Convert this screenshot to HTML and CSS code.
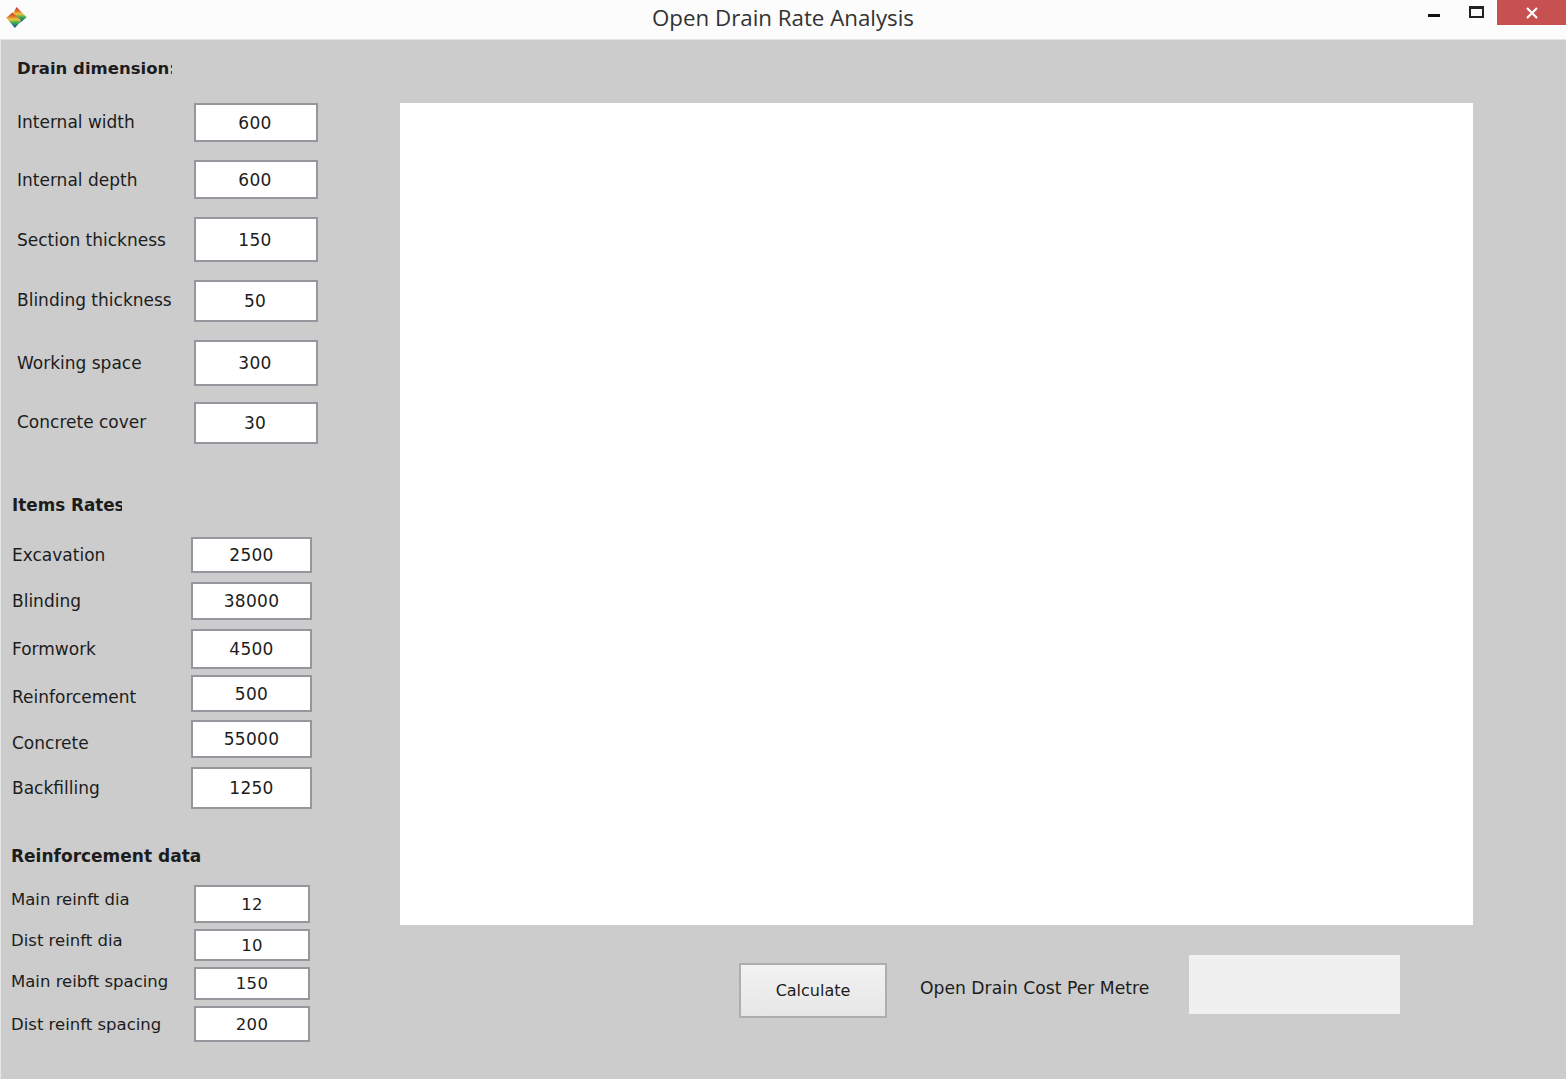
FILE: index.html
```html
<!DOCTYPE html>
<html lang="en">
  <head>
    <title>Open Drain Rate Analysis</title>
    <meta charset="UTF-8" />
    <link rel="stylesheet" href="styles.css">
  </head>
  <body>
    <div class="window">
      <div class="titlebar">
        <svg class="titlebar__logo" width="21" height="21" viewBox="0 0 60 62">
          <defs>
            <linearGradient id="rainbow" x1="0" y1="0" x2="0" y2="1">
              <stop offset="0" stop-color="#c8302a"/>
              <stop offset="0.25" stop-color="#e0702c"/>
              <stop offset="0.45" stop-color="#eec63c"/>
              <stop offset="0.65" stop-color="#3fae50"/>
              <stop offset="1" stop-color="#1c3fb4"/>
            </linearGradient>
          </defs>
          <polygon points="30,0 60,30 42,46 20,20" fill="url(#rainbow)"/>
          <polygon points="0,32 18,16 44,40 40,46 25,62" fill="url(#rainbow)"/>
        </svg>
        <div class="titlebar__title">Open Drain Rate Analysis</div>
        <div class="titlebar__controls">
          <span class="titlebar__min"></span>
          <span class="titlebar__max"></span>
          <span class="titlebar__close">
            <svg width="14" height="12" viewBox="0 0 14 12">
              <path d="M2 1 L12 11 M12 1 L2 11" stroke="#ffffff" stroke-width="2.2" fill="none"/>
            </svg>
          </span>
        </div>
      </div>

      <div class="content">
        <div class="sidebar">
          <div class="group group--dimension">
            <div class="group__title group__title--dimension">Drain dimension:</div>
            <div class="group__rows">
              <div class="field"><span class="field__label">Internal width</span><div class="field__box">600</div></div>
              <div class="field"><span class="field__label">Internal depth</span><div class="field__box">600</div></div>
              <div class="field"><span class="field__label">Section thickness</span><div class="field__box">150</div></div>
              <div class="field"><span class="field__label">Blinding thickness</span><div class="field__box">50</div></div>
              <div class="field"><span class="field__label">Working space</span><div class="field__box">300</div></div>
              <div class="field"><span class="field__label">Concrete cover</span><div class="field__box">30</div></div>
            </div>
          </div>

          <div class="group group--rates">
            <div class="group__title group__title--rates">Items Rates:</div>
            <div class="group__rows">
              <div class="field"><span class="field__label">Excavation</span><div class="field__box">2500</div></div>
              <div class="field"><span class="field__label">Blinding</span><div class="field__box">38000</div></div>
              <div class="field"><span class="field__label">Formwork</span><div class="field__box">4500</div></div>
              <div class="field"><span class="field__label">Reinforcement</span><div class="field__box">500</div></div>
              <div class="field"><span class="field__label">Concrete</span><div class="field__box">55000</div></div>
              <div class="field"><span class="field__label">Backfilling</span><div class="field__box">1250</div></div>
            </div>
          </div>

          <div class="group group--reinf">
            <div class="group__title">Reinforcement data</div>
            <div class="group__rows">
              <div class="field"><span class="field__label">Main reinft dia</span><div class="field__box">12</div></div>
              <div class="field"><span class="field__label">Dist reinft dia</span><div class="field__box">10</div></div>
              <div class="field"><span class="field__label">Main reibft spacing</span><div class="field__box">150</div></div>
              <div class="field"><span class="field__label">Dist reinft spacing</span><div class="field__box">200</div></div>
            </div>
          </div>
        </div>

        <div class="main">
          <div class="main__canvas"></div>
          <div class="main__actions">
            <button class="main__button">Calculate</button>
            <span class="main__label">Open Drain Cost Per Metre</span>
            <div class="main__result"></div>
          </div>
        </div>
      </div>
    </div>
  </body>
</html>
```

FILE: styles.css
```css
html, body {
  margin: 0;
  height: 100%;
}

body {
  font-family: 'DejaVu Sans', Arial, sans-serif;
  font-size: 17px;
  color: #1c1c1c;
  background: #cccccc;
  overflow: hidden;
}

.window {
  display: flex;
  flex-direction: column;
  height: 1079px;
}

.titlebar {
  display: grid;
  grid-template-columns: 1fr auto 1fr;
  height: 39px;
  flex-shrink: 0;
  background: #fcfcfc;
  border-bottom: 1px solid #e4e4e4;
}

.titlebar__logo {
  margin: 7px 0 0 6px;
}

.titlebar__title {
  font-family: 'Open Sans', Arial, sans-serif;
  font-size: 22.3px;
  line-height: 36px;
  color: #333333;
}

.titlebar__controls {
  display: flex;
  justify-content: flex-end;
  align-items: flex-start;
}

.titlebar__min {
  width: 12px;
  height: 3px;
  margin: 14px 29px 0 0;
  background: #111111;
}

.titlebar__max {
  box-sizing: border-box;
  width: 15px;
  height: 12px;
  margin: 6px 13px 0 0;
  border: 2px solid #222222;
  border-top-width: 3px;
}

.titlebar__close {
  display: flex;
  align-items: center;
  justify-content: center;
  width: 69px;
  height: 25px;
  background: #c75050;
}

.content {
  display: flex;
  flex: 1;
  border-left: 1px solid #e6e6e6;
}

.sidebar {
  display: flex;
  flex-direction: column;
  width: 399px;
  flex-shrink: 0;
}

.group__title {
  font-size: 16.8px;
  line-height: 20px;
  font-weight: bold;
  white-space: nowrap;
  overflow: hidden;
}

.group__title--dimension {
  width: 155px;
  font-size: 16.5px;
}

.group__title--rates {
  width: 110px;
}

.group__rows {
  display: grid;
  row-gap: 18px;
}

.field {
  display: flex;
  align-items: center;
  justify-content: space-between;
}

.field__label {
  white-space: nowrap;
}

.field__box {
  box-sizing: border-box;
  display: flex;
  align-items: center;
  justify-content: center;
  height: 100%;
  background: #ffffff;
  border: 2px solid #96969c;
  letter-spacing: 0.3px;
}

.group--dimension {
  width: 301px;
  margin: 19px 0 0 16px;
}

.group--dimension .group__rows {
  grid-template-rows: 39px 39px 45px 42px 46px 40px;
  margin-top: 24px;
}

.group--dimension .field__box {
  width: 124px;
  padding-right: 2px;
}

.group--dimension .field:last-child {
  margin-top: -2px;
}

.group--dimension .field:nth-child(1) .field__label {
  margin-bottom: 1px;
}

.group--dimension .field:nth-child(4) .field__label {
  margin-bottom: 2px;
}

.group--dimension .field:nth-child(6) .field__label {
  margin-bottom: 2px;
}

.group--rates {
  width: 300px;
  margin: 51px 0 0 11px;
}

.group--rates .group__rows {
  grid-template-rows: 36px 38px 40px 34px 37px 42px;
  row-gap: 9px;
  margin-top: 22px;
}

.group--rates .field__box {
  width: 121px;
}

.group--rates .field:nth-child(4) {
  margin-top: -3px;
}

.group--rates .field:nth-child(5) {
  margin-top: -1px;
}

.group--rates .field:nth-child(4) .field__label,
.group--rates .field:nth-child(5) .field__label {
  margin-top: 7px;
}

.group--reinf {
  width: 299px;
  margin: 37px 0 0 10px;
  font-size: 16.5px;
}

.group--reinf .group__title {
  font-size: 17px;
}

.group--reinf .group__rows {
  grid-template-rows: 38px 32px 33px 36px;
  row-gap: 6px;
  margin-top: 19px;
}

.group--reinf .field__box {
  width: 116px;
}

.group--reinf .field:nth-child(1) .field__label,
.group--reinf .field:nth-child(2) .field__label {
  margin-bottom: 10px;
}

.group--reinf .field:nth-child(3) .field__label {
  margin-bottom: 5px;
}

.main {
  display: flex;
  flex-direction: column;
  padding-top: 63px;
}

.main__canvas {
  width: 1073px;
  height: 822px;
  background: #ffffff;
}

.main__actions {
  display: flex;
  align-items: flex-start;
  margin: 30px 0 0 339px;
}

.main__button {
  width: 148px;
  height: 55px;
  margin-top: 8px;
  font: inherit;
  font-size: 16px;
  color: inherit;
  background: linear-gradient(#f2f2f2, #e6e6e6);
  border: 2px solid #aeaeae;
}

.main__label {
  width: 269px;
  margin: 23px 0 0 33px;
  font-size: 17.2px;
  line-height: 20px;
  white-space: nowrap;
}

.main__result {
  width: 211px;
  height: 59px;
  background: #f0f0f0;
}
```
